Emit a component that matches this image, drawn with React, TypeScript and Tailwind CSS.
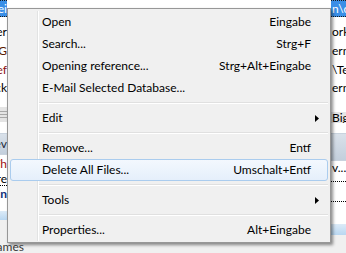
import React from "react";

type Entry =
  | { kind: "item"; label: string; shortcut?: string; sub?: boolean; active?: boolean }
  | { kind: "sep" };

const entries: Entry[] = [
  { kind: "item", label: "Open", shortcut: "Eingabe" },
  { kind: "item", label: "Search...", shortcut: "Strg+F" },
  { kind: "item", label: "Opening reference...", shortcut: "Strg+Alt+Eingabe" },
  { kind: "item", label: "E-Mail Selected Database..." },
  { kind: "sep" },
  { kind: "item", label: "Edit", sub: true },
  { kind: "sep" },
  { kind: "item", label: "Remove...", shortcut: "Entf" },
  { kind: "item", label: "Delete All Files...", shortcut: "Umschalt+Entf", active: true },
  { kind: "sep" },
  { kind: "item", label: "Tools", sub: true },
  { kind: "sep" },
  { kind: "item", label: "Properties...", shortcut: "Alt+Eingabe" },
];

// rows of the list behind the menu, only the edges are visible
const leftRows = [
  { h: "h-[17px]", text: "Datei", cls: "bg-[#3a8ee6] text-white border-y border-dotted border-[#1a1a1a]" },
  { h: "h-[6px]", text: "", cls: "" },
  { h: "h-[18px]", text: "Partner", cls: "text-black" },
  { h: "h-[19px]", text: "AnlagetG", cls: "text-[#5a1a00]" },
  { h: "h-[19px]", text: "Brief", cls: "text-[#8a1010]" },
  { h: "h-[18px]", text: "Check", cls: "text-black" },
];

const rightRows = [
  { h: "h-[17px]", text: "n\\c", cls: "bg-[#3a8ee6] text-white border-y border-dotted border-[#1a1a1a]" },
  { h: "h-[6px]", text: "", cls: "" },
  { h: "h-[18px]", text: "ork", cls: "text-black" },
  { h: "h-[19px]", text: "ern", cls: "text-black" },
  { h: "h-[19px]", text: "\\Te", cls: "text-black" },
  { h: "h-[18px]", text: "ern", cls: "text-black" },
];

function Arrow() {
  return (
    <svg width="4" height="7" viewBox="0 0 4 7" className="ml-auto">
      <path d="M0 0 L4 3.5 L0 7 Z" fill="#000" />
    </svg>
  );
}

function MenuItem({ label, shortcut, sub, active }: { label: string; shortcut?: string; sub?: boolean; active?: boolean }) {
  const base = active
    ? "rounded-[3px] border border-[#aaccee] bg-gradient-to-b from-[#f3f8fe] to-[#e5effb] pl-[31px] pr-[16px]"
    : "pl-[32px] pr-[17px]";
  return (
    <div className={`relative z-10 flex h-[22px] items-center whitespace-nowrap ${base} ${sub ? "!pr-[9px]" : ""}`}>
      <span>{label}</span>
      {shortcut && <span className="ml-auto">{shortcut}</span>}
      {sub && <Arrow />}
    </div>
  );
}

function Separator() {
  return (
    <div className="flex h-[8px] items-center pl-[27px]">
      <div className="h-[2px] w-full border-t border-b border-t-[#e0e0e0] border-b-white" />
    </div>
  );
}

function ContextMenu() {
  return (
    <div className="absolute left-[7px] top-[8px] w-[324px] border border-[#979797] bg-[#f0f0f0] px-[2px] pt-[2px] pb-[1px] text-black shadow-[2px_2px_3px_rgba(0,0,0,0.45)]">
      <div className="absolute bottom-[1px] left-[29px] top-[2px] w-[2px] border-l border-r border-l-[#e2e3e3] border-r-white" />
      {entries.map((e, i) =>
        e.kind === "sep" ? (
          <Separator key={i} />
        ) : (
          <MenuItem key={i} label={e.label} shortcut={e.shortcut} sub={e.sub} active={e.active} />
        )
      )}
    </div>
  );
}

export default function App() {
  return (
    <div className="relative h-[253px] w-[346px] overflow-hidden bg-[#f0f0f0] font-['Lato',sans-serif] text-[12px] leading-none">
      <div className="flex h-[241px]">
        {/* left pane edge */}
        <div className="flex w-[7px] flex-col bg-white">
          {leftRows.map((r, i) => (
            <div key={i} className={`flex ${r.h} items-center justify-end overflow-hidden whitespace-nowrap ${r.cls}`}>
              {r.text}
            </div>
          ))}
          <div className="h-[10px]" />
          <div className="flex h-[15px] flex-col justify-center gap-[2px] bg-[#e4e4e4]">
            <div className="h-px bg-[#a8a8a8]" />
            <div className="h-px bg-[#a8a8a8]" />
            <div className="h-px bg-[#a8a8a8]" />
          </div>
          <div className="h-[11px]" />
          <div className="flex h-[22px] items-center justify-end overflow-hidden whitespace-nowrap border-y border-[#c9d3de] bg-gradient-to-b from-[#d9e1ea] to-[#c3cfdc] text-[#1e2a38]">
            Rev
          </div>
          <div className="flex h-[17px] items-center justify-end overflow-hidden whitespace-nowrap text-[#a01010]">
            Th
          </div>
          <div className="flex h-[14px] items-center justify-end overflow-hidden whitespace-nowrap border-b border-dotted border-black">
            re
          </div>
          <div className="flex h-[16px] items-center justify-end overflow-hidden whitespace-nowrap font-bold text-[#10307a]">
            in
          </div>
          <div className="h-[9px]" />
          <div className="h-[9px] bg-gradient-to-b from-[#dcebf8] to-[#b9d7f1]" />
          <div className="flex-1 bg-[#f0f0f0]" />
        </div>

        <div className="flex-1 bg-white" />

        {/* right pane edge */}
        <div className="flex w-[15px] flex-col bg-white">
          {rightRows.map((r, i) => (
            <div key={i} className={`flex ${r.h} items-center overflow-hidden whitespace-nowrap pl-[1px] ${r.cls}`}>
              {r.text}
            </div>
          ))}
          <div className="h-[15px]" />
          <div className="flex h-[11px] items-center overflow-hidden whitespace-nowrap bg-[#e6e6e6] pl-[1px]">Big</div>
          <div className="h-[10px]" />
          <div className="h-[28px] border-y border-[#c9d3de] bg-gradient-to-b from-[#d9e1ea] to-[#c3cfdc]" />
          <div className="flex h-[13px] items-center overflow-hidden whitespace-nowrap pl-[1px]">v...</div>
          <div className="h-[8px] border-b border-dotted border-black" />
          <div className="h-[20px] border-b border-dotted border-black" />
          <div className="h-[22px]" />
          <div className="h-[11px] bg-gradient-to-b from-[#dcebf8] to-[#b9d7f1]" />
          <div className="flex-1 bg-[#f0f0f0]" />
        </div>
      </div>
      <div className="flex h-[12px] w-[24px] items-center justify-end overflow-hidden whitespace-nowrap text-[#3b3b3b]">
        Names
      </div>
      <ContextMenu />
    </div>
  );
}
